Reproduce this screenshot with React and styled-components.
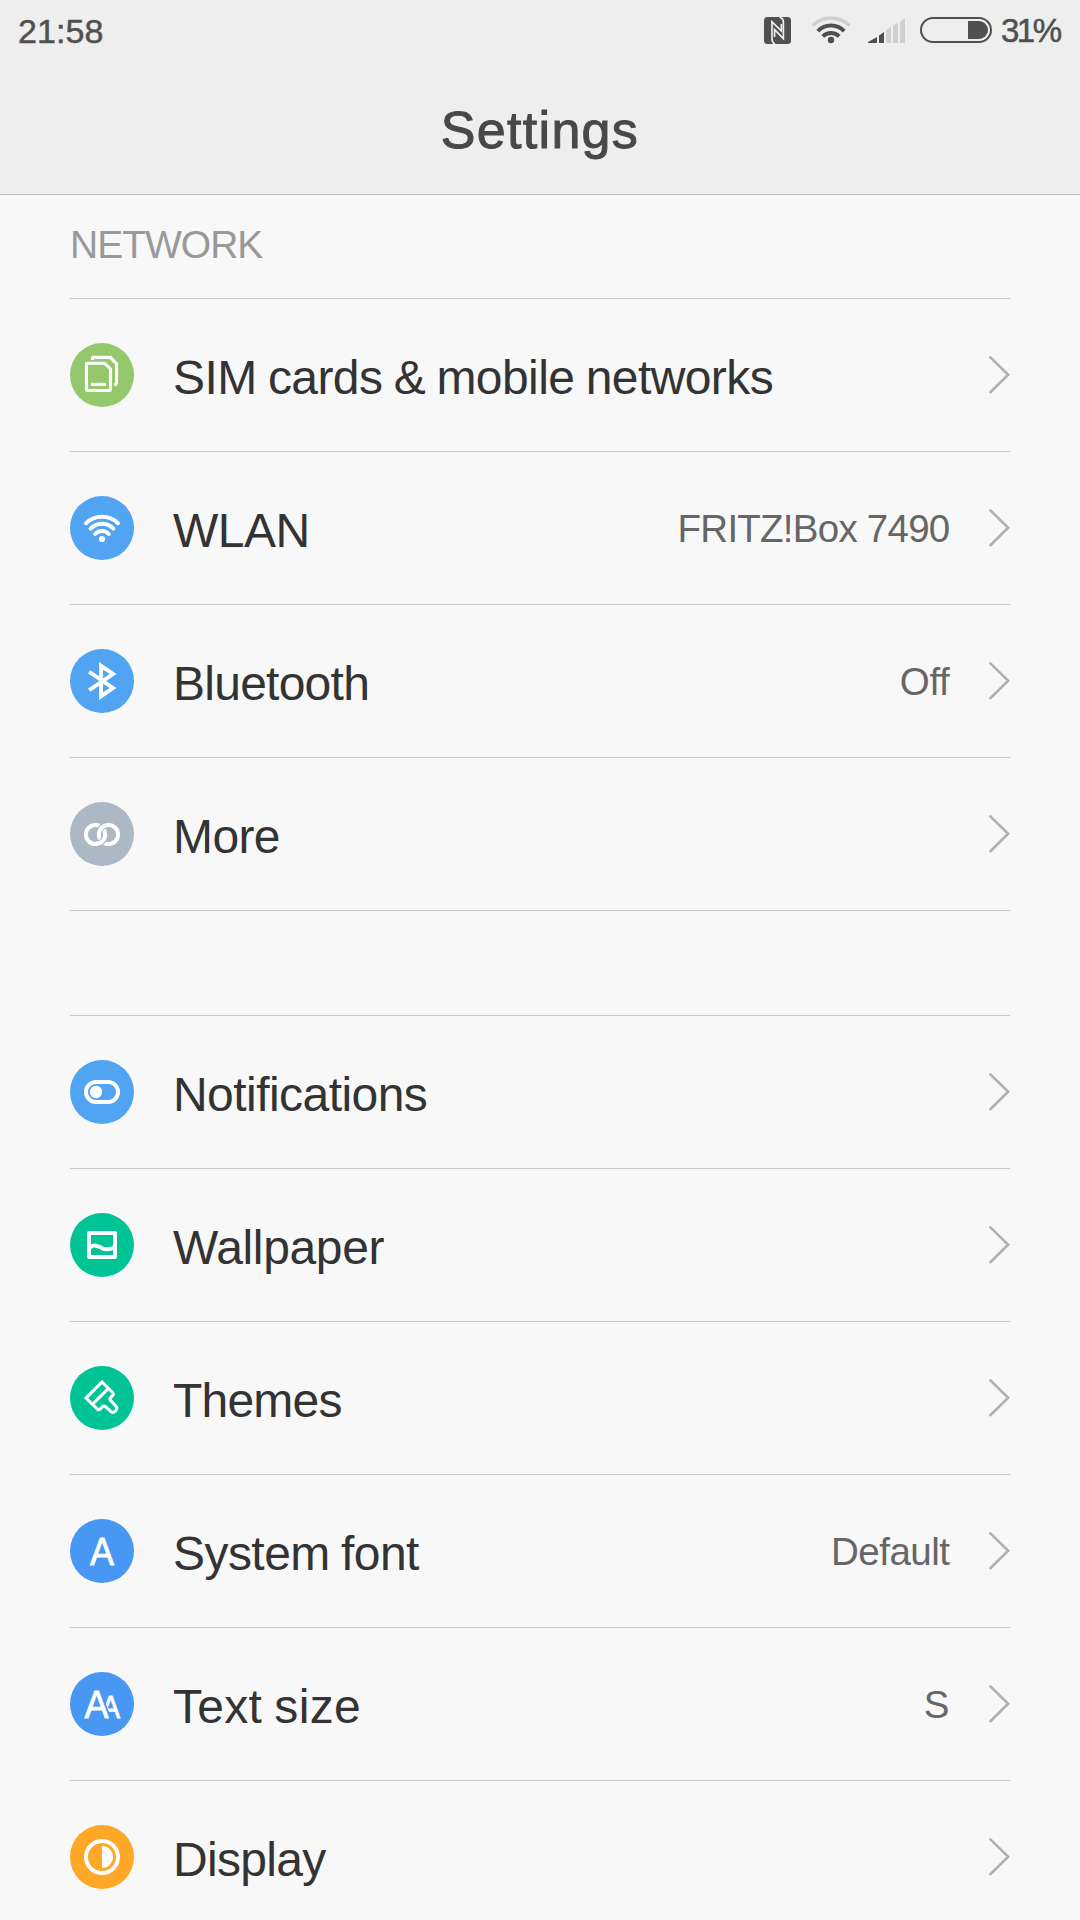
import styled, { createGlobalStyle } from 'styled-components';

const GlobalStyle = createGlobalStyle`
  * {
    box-sizing: border-box;
  }
  body {
    margin: 0;
    background: #f8f8f8;
    font-family: 'Liberation Sans', Arial, sans-serif;
  }
`;

const SimIcon = () => (
  <g fill="none" stroke="#fff" strokeWidth="3.1">
    <path d="M17.3 20.3H34.6L40.5 26V46.6Q40.5 47.5 39.6 47.5H17.3Q16.4 47.5 16.4 46.6V21.2Q16.4 20.3 17.3 20.3Z" />
    <path d="M22.4 17V15.3Q22.4 14.4 23.3 14.4H40.4L46.5 20.8V40.6Q46.5 41.5 45.6 41.5H44" />
    <path d="M21 41.4H36" />
  </g>
);

const WlanIcon = () => (
  <>
    <g fill="none" stroke="#fff" strokeWidth="4" strokeLinecap="round">
      <path d="M16 27.2A22.9 22.9 0 0 1 48 27.2" />
      <path d="M20.6 32.6A15.7 15.7 0 0 1 43.4 32.6" />
      <path d="M25.2 38A9.1 9.1 0 0 1 38.8 38" />
    </g>
    <circle cx="32" cy="43" r="3.1" fill="#fff" />
  </>
);

const BluetoothIcon = () => (
  <path
    d="M19.2 22.8L43 39L31.1 47.2V16.8L43 25L19.2 41.2"
    fill="none"
    stroke="#fff"
    strokeWidth="3.9"
  />
);

// two linked rings: the right one passes over at the top, the left one at the bottom
const MoreIcon = () => (
  <g fill="none" stroke="#fff" strokeWidth="4">
    <circle cx="25.5" cy="32.5" r="9.6" />
    <path d="M36.5 23.1A9.6 9.6 0 0 0 28.9 32.5" stroke="#acb9c4" strokeWidth="6.6" />
    <circle cx="38.5" cy="32.5" r="9.6" />
    <path d="M35.1 32.5A9.6 9.6 0 0 1 27.5 41.9" stroke="#acb9c4" strokeWidth="6.6" />
    <path d="M35.1 31.5A9.6 9.6 0 0 1 25.5 42.1" />
  </g>
);

const NotificationsIcon = () => (
  <>
    <rect x="16" y="22" width="32" height="20" rx="10" fill="none" stroke="#fff" strokeWidth="4" />
    <circle cx="26" cy="32" r="6.2" fill="#fff" />
  </>
);

const WallpaperIcon = () => (
  <g fill="none" stroke="#fff" strokeWidth="4">
    <rect x="19" y="20" width="26" height="24" strokeLinejoin="round" />
    <path d="M20 34.2C25 31 28 33.2 32 35.2C36 37 39 37 44 34.4" />
  </g>
);

const ThemesIcon = () => (
  <g fill="none" stroke="#fff" strokeWidth="3.1">
    <path d="M32.1 16L42.8 26.7Q44 28 42.8 29.3L40.6 31.6Q39.3 33 40.6 34.4L46 40.2Q47.6 42.2 45.8 44.6Q43.4 47.6 41 45.6L35.4 40.6Q34 39.4 32.6 40.7L30.2 43Q28.8 44.3 27.4 43.2L16 32.1Z" />
    <path d="M38.4 22.4L22.6 38.2" />
  </g>
);

const FontIcon = () => (
  <Glyph x="20" y="46" fontSize="39" textLength="24" lengthAdjust="spacingAndGlyphs">
    A
  </Glyph>
);

const TextSizeIcon = () => (
  <>
    <clipPath id="behind">
      <path d="M31 18H64V48H41.8Z" />
    </clipPath>
    <g clipPath="url(#behind)">
      <Glyph x="31" y="46" fontSize="31.5" textLength="19" lengthAdjust="spacingAndGlyphs">
        A
      </Glyph>
    </g>
    <Glyph x="14.5" y="46" fontSize="39" textLength="24" lengthAdjust="spacingAndGlyphs">
      A
    </Glyph>
  </>
);

const DisplayIcon = () => (
  <>
    <circle cx="32" cy="32" r="16" fill="none" stroke="#fff" strokeWidth="4" />
    <path d="M32 21A11 11 0 0 1 32 43Z" fill="#fff" />
  </>
);

const network = [
  { label: 'SIM cards & mobile networks', icon: SimIcon, color: '#93c86c', tracking: -0.57 },
  { label: 'WLAN', icon: WlanIcon, color: '#50a4f2', tracking: -0.5, value: 'FRITZ!Box 7490', valueTracking: -0.75 },
  { label: 'Bluetooth', icon: BluetoothIcon, color: '#50a4f2', tracking: -0.75, value: 'Off', valueTracking: -0.3 },
  { label: 'More', icon: MoreIcon, color: '#acb9c4', tracking: -0.6 },
];

const personal = [
  { label: 'Notifications', icon: NotificationsIcon, color: '#50a4f2', tracking: -0.55 },
  { label: 'Wallpaper', icon: WallpaperIcon, color: '#00c396', tracking: -0.35 },
  { label: 'Themes', icon: ThemesIcon, color: '#00c396', tracking: -0.8 },
  { label: 'System font', icon: FontIcon, color: '#4797f3', tracking: -0.55, value: 'Default', valueTracking: -0.5 },
  { label: 'Text size', icon: TextSizeIcon, color: '#4797f3', tracking: 0.3, value: 'S' },
  { label: 'Display', icon: DisplayIcon, color: '#ffa827', tracking: -0.7 },
];

const renderRow = ({ label, icon: Icon, color, tracking, value, valueTracking }) => (
  <Row key={label}>
    <Badge viewBox="0 0 64 64">
      <circle cx="32" cy="32" r="32" fill={color} />
      <Icon />
    </Badge>
    <Label $tracking={tracking}>{label}</Label>
    {value && <Value $tracking={valueTracking}>{value}</Value>}
    <Chevron viewBox="0 0 21 38">
      <path d="M1.4 1.4L19.2 18.8L1.4 36.2" />
    </Chevron>
  </Row>
);

export default function App() {
  return (
    <Screen>
      <GlobalStyle />
      <Header>
        <StatusBar>
          <Clock>21:58</Clock>
          <StatusIcons width="240" height="40" viewBox="760 12 240 40">
            <rect x="764" y="17" width="27" height="27" rx="3.5" fill="#505050" />
            <g fill="none" stroke="#eee" strokeWidth="1.7">
              <path d="M775 44Q772 42.5 772 39V21.8L781.4 31V24" />
              <path d="M779.5 17Q783.4 18.4 783.4 22V38.6L774.6 29.6V37" />
            </g>
            <g fill="none" strokeWidth="4">
              <path d="M812.6 25.6A26 26 0 0 1 849.4 25.6" stroke="#d0d0d0" strokeWidth="3.4" />
              <path d="M817.8 31.2A18.4 18.4 0 0 1 844.2 31.2" stroke="#505050" />
              <path d="M822.8 36.4A11.4 11.4 0 0 1 839.2 36.4" stroke="#505050" />
            </g>
            <circle cx="831" cy="40" r="3.2" fill="#505050" />
            <path d="M868 43V42L877 37V43ZM879 43V35.4L884 32V43Z" fill="#505050" />
            <path d="M886 43V30.4L891 27V43ZM893 43V26L898 22.6V43ZM900 43V21.4L905 18V43Z" fill="#d0d0d0" />
            <rect x="921" y="18" width="70" height="24" rx="12" fill="none" stroke="#505050" strokeWidth="2" />
            <path d="M968 21H979A9 9 0 0 1 979 39H968Z" fill="#505050" />
          </StatusIcons>
          <Battery>31%</Battery>
        </StatusBar>
        <Title>Settings</Title>
      </Header>
      <Content>
        <SectionTitle>NETWORK</SectionTitle>
        <List>{network.map(renderRow)}</List>
        <Gap />
        <List>{personal.map(renderRow)}</List>
      </Content>
    </Screen>
  );
}

const Screen = styled.div`
  width: 1080px;
  height: 1920px;
  overflow: hidden;
  background: #f8f8f8;
`;

const Header = styled.header`
  height: 195px;
  background: #eeeeee;
  border-bottom: 1px solid #bdbdbd;
`;

const StatusBar = styled.div`
  height: 60px;
  padding: 0 17px 0 18px;
  display: flex;
  align-items: flex-start;
  color: #505050;
  font-size: 34px;
  line-height: 40px;
  -webkit-text-stroke: 0.5px #505050;
`;

const Clock = styled.span`
  flex: 1;
  padding-top: 11px;
  letter-spacing: 0.1px;
`;

const StatusIcons = styled.svg`
  margin-top: 12px;
`;

const Battery = styled.span`
  width: 62px;
  margin-left: 1px;
  padding-top: 11px;
  font-size: 33px;
  letter-spacing: -2.5px;
  white-space: nowrap;
`;

const Title = styled.h1`
  margin: 0;
  padding-top: 40px;
  color: #484848;
  font-size: 52px;
  font-weight: 400;
  line-height: 60px;
  letter-spacing: 1.3px;
  text-align: center;
  -webkit-text-stroke: 1px #484848;
`;

const Content = styled.main`
  padding: 0 70px;
`;

const SectionTitle = styled.h2`
  margin: 0;
  height: 103px;
  padding-top: 28px;
  color: #999999;
  font-size: 39px;
  font-weight: 400;
  line-height: 44px;
  letter-spacing: -1px;
`;

const List = styled.ul`
  margin: 0;
  padding: 0;
  list-style: none;
  border-top: 1px solid #c8c8c8;
`;

const Gap = styled.div`
  height: 104px;
`;

const Row = styled.li`
  height: 153px;
  display: flex;
  align-items: center;
  border-bottom: 1px solid #c8c8c8;
`;

const Badge = styled.svg`
  width: 64px;
  height: 64px;
`;

const Label = styled.span`
  flex: 1;
  margin-left: 39px;
  padding-top: 4px;
  color: #333333;
  font-size: 48px;
  white-space: nowrap;
  word-spacing: -1.5px;
  letter-spacing: ${(props) => props.$tracking}px;
`;

const Value = styled.span`
  padding-top: 2px;
  margin-right: 39.5px;
  color: #666666;
  font-size: 38.5px;
  letter-spacing: ${(props) => props.$tracking || 0}px;
`;

const Chevron = styled.svg`
  width: 21px;
  height: 38px;
  fill: none;
  stroke: #b0b0b0;
  stroke-width: 2.6px;
  stroke-linecap: round;
`;

const Glyph = styled.text`
  fill: #fff;
  stroke: #fff;
  stroke-width: 0.8px;
  font-family: 'Liberation Sans', Arial, sans-serif;
`;
